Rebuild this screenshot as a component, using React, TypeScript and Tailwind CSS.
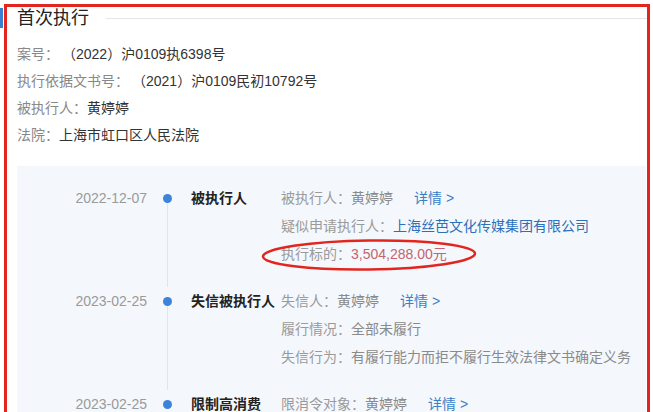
export default function App() {
  const font = { fontFamily: '"Liberation Sans", "Noto Sans CJK SC", sans-serif' };

  const items = [
    {
      date: "2022-12-07",
      title: "被执行人",
      rows: [
        { label: "被执行人：", value: "黄婷婷", link: true },
        { label: "疑似申请执行人：", value: "上海丝芭文化传媒集团有限公司", blue: true },
        { label: "执行标的：", value: "3,504,288.00元", money: true },
      ],
    },
    {
      date: "2023-02-25",
      title: "失信被执行人",
      rows: [
        { label: "失信人：", value: "黄婷婷", link: true },
        { label: "履行情况：", value: "全部未履行" },
        { label: "失信行为：", value: "有履行能力而拒不履行生效法律文书确定义务" },
      ],
    },
    {
      date: "2023-02-25",
      title: "限制高消费",
      rows: [{ label: "限消令对象：", value: "黄婷婷", link: true }],
    },
  ];

  return (
    <div style={font} className="relative w-[653px] h-[412px] overflow-hidden bg-white text-[14px]">
      {/* blue marker at far left */}
      <div className="absolute left-0 top-[8px] w-[3px] h-[20px] bg-[#3b7fd0]" />

      <div className="ml-[4px] mt-[4px] w-[646px] h-[440px] border-[3px] border-[#e2261f]">
        {/* heading */}
        <div className="flex items-center h-[22px] pl-[10px]">
          <span className="text-[18px] text-[#222] leading-[22px]">首次执行</span>
          <div className="ml-[17px] flex-1 h-px bg-[#e6e6e6]" />
        </div>

        {/* case info */}
        <div className="mt-[12px] pl-[10px] leading-[27px]">
          <div>
            <span className="text-[#888]">案号：</span>
            <span className="ml-[10px] text-[#333]">（2022）沪0109执6398号</span>
          </div>
          <div>
            <span className="text-[#888]">执行依据文书号：</span>
            <span className="ml-[10px] text-[#333]">（2021）沪0109民初10792号</span>
          </div>
          <div>
            <span className="text-[#888]">被执行人：</span>
            <span className="text-[#333]">黄婷婷</span>
          </div>
          <div>
            <span className="text-[#888]">法院：</span>
            <span className="text-[#333]">上海市虹口区人民法院</span>
          </div>
        </div>

        {/* timeline panel */}
        <div className="mt-[17px] ml-[10px] mr-[1px] bg-[#f4f8fc] pt-[18px] h-[300px]">
          {items.map((item, i) => (
            <div key={i} className="flex pb-[19px] leading-[28px]">
              <div className="w-[130px] text-right text-[#9a9a9a]">{item.date}</div>
              <div className="relative w-[42px]">
                <div className="absolute left-[16px] top-[10px] w-[9px] h-[9px] rounded-full bg-[#3d84d8]" />
                {i < items.length - 1 && (
                  <div className="absolute left-[20px] top-[19px] bottom-0 w-px bg-[#dfe5ec]" />
                )}
                {i < items.length - 1 && (
                  <div className="absolute left-[20px] bottom-[-19px] h-[29px] w-px bg-[#dfe5ec]" />
                )}
              </div>
              <div className="w-[92px] pl-[2px] font-bold text-[#222]">{item.title}</div>
              <div className="flex-1">
                {item.rows.map((r, j) => (
                  <div key={j} className="flex">
                    <span className="text-[#9a9a9a]">{r.label}</span>
                    <span
                      className={
                        r.blue
                          ? "text-[#2d6fb9]"
                          : r.money
                          ? "text-[#c4646f]"
                          : "text-[#8a8a8a]"
                      }
                    >
                      {r.value}
                    </span>
                    {r.link && <span className="ml-[21px] text-[#3a7fc9]">详情 &gt;</span>}
                  </div>
                ))}
              </div>
            </div>
          ))}
        </div>
      </div>

      {/* hand-drawn red ellipse annotation */}
      <svg className="absolute left-0 top-0 pointer-events-none" width="653" height="412">
        <ellipse
          cx="369"
          cy="255"
          rx="106"
          ry="14.5"
          fill="none"
          stroke="#e2261f"
          strokeWidth="2.5"
          transform="rotate(-0.8 369 255)"
        />
      </svg>
    </div>
  );
}
